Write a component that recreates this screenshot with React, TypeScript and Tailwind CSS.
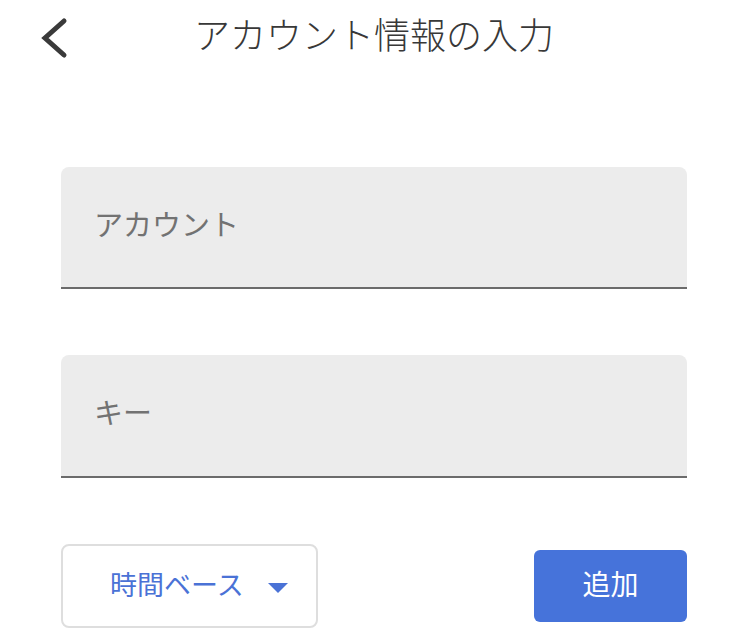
export default function App() {
  const font = { fontFamily: '"Roboto", "Noto Sans CJK JP", sans-serif' };
  return (
    <main className="min-h-screen w-[744px] bg-white text-[#3a3a3a]" style={font}>
      <header className="relative flex h-[76px] items-center justify-center">
        <button type="button" className="absolute left-[38px] top-[17px] p-0">
          <svg width="30" height="42" viewBox="0 0 30 42" fill="none">
            <path d="M26 4 L7 21 L26 38" stroke="#3a3a3a" strokeWidth="5" strokeLinecap="round" strokeLinejoin="miter" />
          </svg>
        </button>
        <h1 className="-mt-[3px] ml-[4px] text-[36px] font-light leading-none text-[#383838]">アカウント情報の入力</h1>
      </header>

      <div className="flex flex-col pl-[61px] pr-[57px] pt-[91px]">
        <div className="flex h-[122px] items-center rounded-t-[8px] border-b-2 border-[#6b6b6b] bg-[#ececec] px-[33px]">
          <span className="-mt-[2px] text-[29px] leading-none text-[#727272]">アカウント</span>
        </div>
        <div className="mt-[66px] flex h-[123px] items-center rounded-t-[8px] border-b-2 border-[#6b6b6b] bg-[#ececec] px-[33px]">
          <span className="-mt-[2px] text-[29px] leading-none text-[#727272]">キー</span>
        </div>

        <div className="mt-[66px] flex items-center justify-between">
          <button
            type="button"
            className="flex h-[84px] w-[257px] items-center rounded-[8px] border-2 border-[#dedede] bg-white pl-[47px]"
          >
            <span className="text-[27px] leading-none text-[#4a72d6]">時間ベース</span>
            <svg className="ml-[24px] mt-[4px]" width="20" height="10" viewBox="0 0 20 10">
              <path d="M0 0 L20 0 L10 10 Z" fill="#4a72d6" />
            </svg>
          </button>
          <button
            type="button"
            className="flex h-[72px] w-[153px] items-center justify-center rounded-[6px] bg-[#4673da] text-[28px] leading-none text-white"
          >
            追加
          </button>
        </div>
      </div>
    </main>
  );
}
